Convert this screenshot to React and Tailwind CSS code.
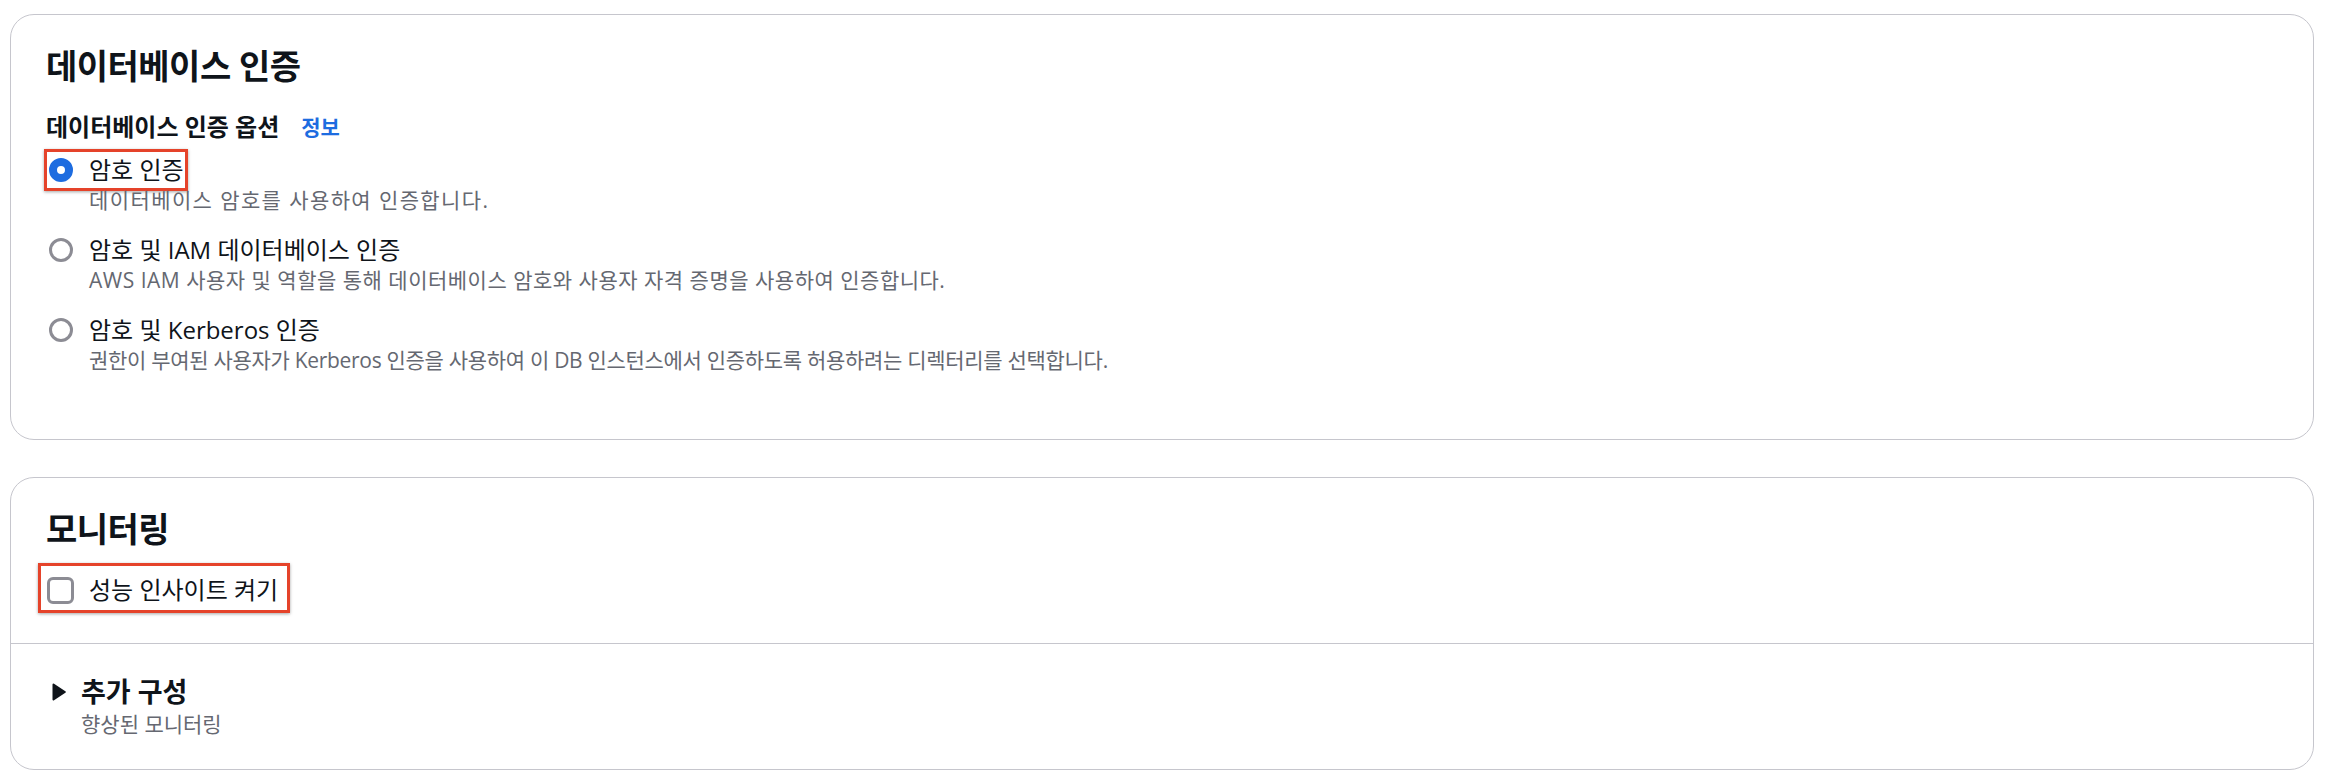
import React from 'react';

const options = [
  {
    label: '암호 인증',
    desc: '데이터베이스 암호를 사용하여 인증합니다.',
    spacing: 'tracking-[1.4px]',
    checked: true,
    highlight: true,
  },
  {
    label: '암호 및 IAM 데이터베이스 인증',
    desc: 'AWS IAM 사용자 및 역할을 통해 데이터베이스 암호와 사용자 자격 증명을 사용하여 인증합니다.',
    spacing: 'tracking-[0.5px]',
  },
  {
    label: '암호 및 Kerberos 인증',
    desc: '권한이 부여된 사용자가 Kerberos 인증을 사용하여 이 DB 인스턴스에서 인증하도록 허용하려는 디렉터리를 선택합니다.',
    spacing: 'tracking-[-0.3px]',
  },
];

function RadioOption({ label, desc, spacing, checked, highlight }) {
  return (
    <div>
      <div className="flex">
        <div
          className={`-mx-[2px] -my-[6px] flex items-center border-[3px] py-[3px] pl-[2px] pr-[1px] ${
            highlight ? 'border-[#e5432a] shadow-[0_1px_3px_rgba(0,0,0,0.35)]' : 'border-transparent'
          }`}
        >
          {checked ? (
            <span className="h-[24px] w-[24px] shrink-0 rounded-full border-[8px] border-[#1d6ce0] bg-white" />
          ) : (
            <span className="h-[24px] w-[24px] shrink-0 rounded-full border-[3px] border-[#8c8c94] bg-white" />
          )}
          <span className="ml-[16px] text-[24px] leading-[30px] text-[#0f141a]">{label}</span>
        </div>
      </div>
      <p className={`pl-[43px] text-[21px] leading-[30px] text-[#656871] ${spacing}`}>{desc}</p>
    </div>
  );
}

function Card({ children }) {
  return <div className="rounded-[24px] border border-[#c6c6cd] bg-white">{children}</div>;
}

export default function App() {
  return (
    <div className="min-h-screen bg-white pl-[10px] pr-[14px] pt-[14px] font-['Open_Sans','Noto_Sans_CJK_KR',sans-serif]">
      <Card>
        <div className="px-[35px] pb-[64px] pt-[31px]">
          <h2 className="text-[34px] font-bold leading-[40px] tracking-[-0.5px] text-[#0f141a]">데이터베이스 인증</h2>

          <div className="mt-[26px] flex items-center">
            <span className="text-[24px] font-bold leading-[30px] text-[#0f141a]">데이터베이스 인증 옵션</span>
            <span className="ml-[22px] text-[21px] font-bold leading-[30px] text-[#1d6ce0]">정보</span>
          </div>

          <div className="mt-[13px] space-y-[20px]">
            {options.map((o) => (
              <RadioOption key={o.label} {...o} />
            ))}
          </div>
        </div>
      </Card>

      <div className="mt-[37px]">
        <Card>
          <div className="px-[35px] pb-[38px] pt-[31px]">
            <h2 className="text-[34px] font-bold leading-[40px] tracking-[-0.5px] text-[#0f141a]">모니터링</h2>
            <div className="mt-[26px] flex">
              <div className="-mb-[8px] -ml-[8px] -mt-[12px] flex items-center border-[3px] border-[#e5432a] pb-[5px] pl-[6px] pr-[9px] pt-[9px] shadow-[0_1px_3px_rgba(0,0,0,0.35)]">
                <span className="h-[27px] w-[27px] shrink-0 rounded-[6px] border-[3px] border-[#8c8c94] bg-white" />
                <span className="ml-[15px] text-[24px] leading-[30px] text-[#0f141a]">성능 인사이트 켜기</span>
              </div>
            </div>
          </div>

          <div className="border-t border-[#c6c6cd] px-[35px] pb-[32px] pt-[32px]">
            <div className="flex items-center">
              <svg width="14" height="18" viewBox="0 0 14 18" className="ml-[6px] shrink-0">
                <path d="M1.5 1.5 L12.8 9 L1.5 16.5 Z" fill="#0f141a" stroke="#0f141a" strokeWidth="2" strokeLinejoin="round" />
              </svg>
              <span className="ml-[15px] text-[27px] font-bold leading-[32px] text-[#0f141a]">추가 구성</span>
            </div>
            <p className="mt-[3px] pl-[35px] text-[21px] leading-[26px] text-[#656871]">향상된 모니터링</p>
          </div>
        </Card>
      </div>
    </div>
  );
}
